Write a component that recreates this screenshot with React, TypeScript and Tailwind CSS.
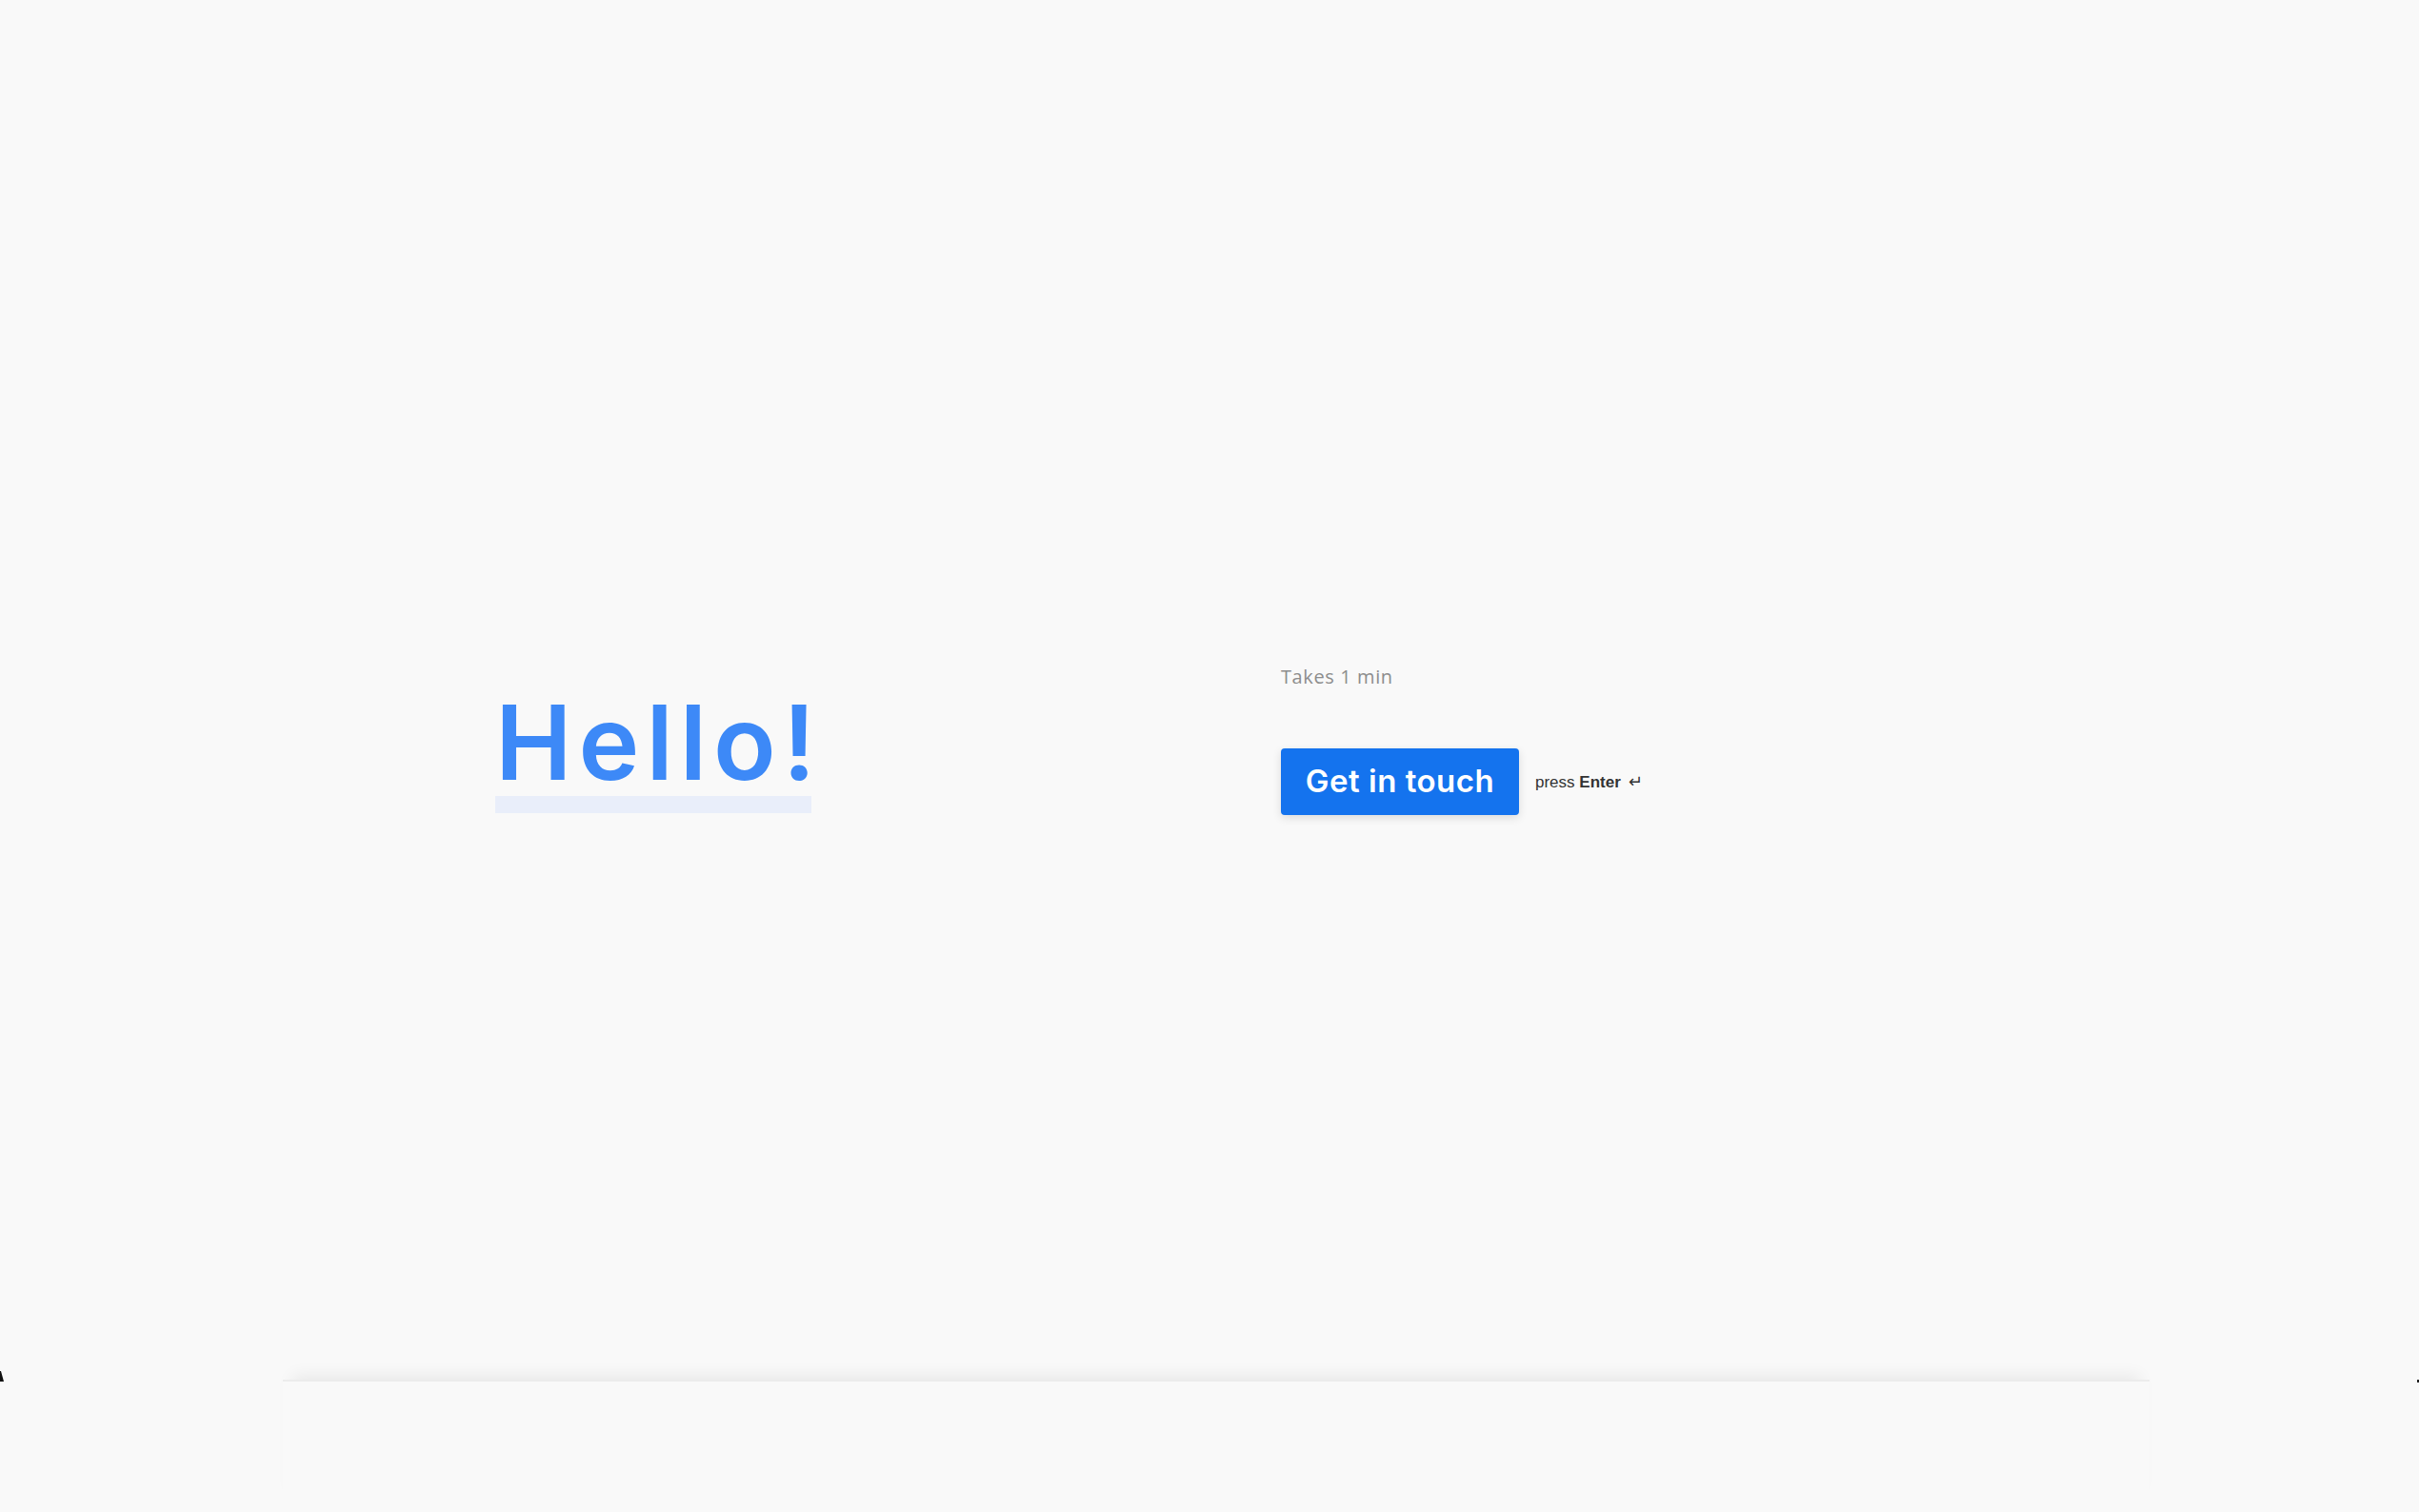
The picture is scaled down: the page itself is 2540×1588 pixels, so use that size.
import React from "react";

export default function App() {
  return (
    <div className="relative flex h-[1588px] w-full flex-col overflow-hidden bg-[#f9f9f9]">
      <main className="h-[1449px] shrink-0 pt-[701px]">
        <div className="flex items-start">
          <div className="ml-[520px] mt-[25px] w-[825px] shrink-0">
            <h1
              className="text-[108px] font-semibold leading-none tracking-[0.065em] text-[#3d89f7]"
              style={{ fontFamily: "Inter, 'Liberation Sans', sans-serif" }}
            >
              Hello!
            </h1>
            <div className="mt-[2px] h-[18px] w-[332px] bg-[#e9eefa]" />
          </div>
          <div className="flex flex-col">
            <p
              className="text-[20px] leading-5 tracking-[0.03em] text-[#8d8d8d]"
              style={{ fontFamily: "'Open Sans', 'Liberation Sans', sans-serif" }}
            >
              Takes 1 min
            </p>
            <div className="mt-[65px] flex items-center">
              <button
                className="flex h-[70px] w-[250px] items-center justify-center rounded-[4px] bg-[#1473ee] text-[33px] font-semibold tracking-[0.015em] text-white shadow-[0_3px_10px_rgba(0,0,0,0.12)]"
                style={{ fontFamily: "Inter, 'Liberation Sans', sans-serif" }}
              >
                Get in touch
              </button>
              <span
                className="ml-[17px] text-[17px] text-[#333333]"
                style={{ fontFamily: "'Liberation Sans', Arial, sans-serif" }}
              >
                press <span className="font-bold">Enter</span>
                <span className="ml-[8px] text-[18px]">↵</span>
              </span>
            </div>
          </div>
        </div>
      </main>
      <div className="ml-[297px] h-[139px] w-[1960px] shrink-0 border-t-2 border-[#ececec] bg-[#f9f9f9] shadow-[0_-14px_16px_-10px_rgba(0,0,0,0.07)]" />
      <svg
        className="absolute left-0 top-[1438px]"
        width="5"
        height="14"
        viewBox="0 0 5 14"
      >
        <polygon points="0,2 1,2 4,13 0,13" fill="#111" />
      </svg>
      <div className="absolute right-0 top-[1449px] h-[3px] w-[2px] bg-[#222]" />
    </div>
  );
}
